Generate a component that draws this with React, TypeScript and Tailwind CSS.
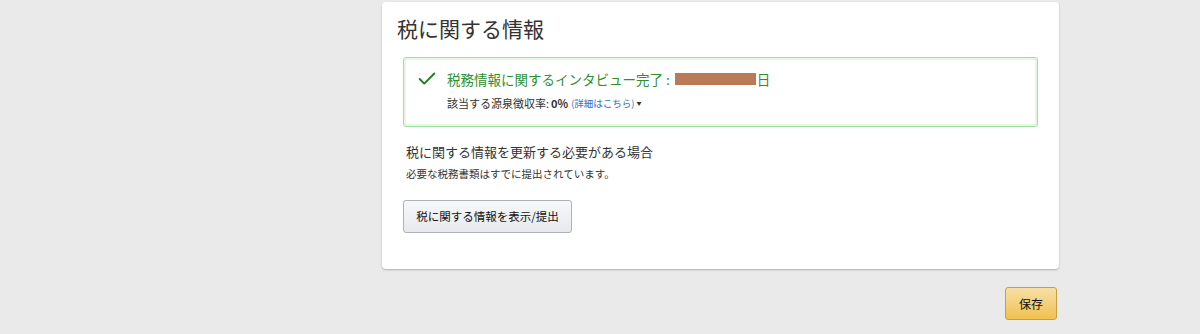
import { Check } from "lucide-react";

const font = { fontFamily: '"Noto Sans CJK JP", "Noto Sans", sans-serif' };

const App = () => {
  return (
    <div className="min-h-[334px] w-[1200px] bg-[#eaeaea] pt-[2px]" style={font}>
      <div className="ml-[382px] w-[677px] rounded-[4px] bg-white shadow-[0_1px_2px_rgba(0,0,0,0.25)] pb-[36px]">
        <h2 className="px-[15px] pt-[10px] text-[21px] leading-[32px] text-[#333]">税に関する情報</h2>

        <div className="mx-[21px] mt-[13px] h-[70px] rounded-[3px] border border-[#9ee09e] shadow-[inset_0_0_0_2px_#e6f7e6] px-[12px] pt-[10px]">
          <div className="flex items-center">
            <Check size={22} strokeWidth={2} className="text-[#1f7a1f]" />
            <span className="ml-[9px] text-[13.5px] leading-[22px] text-[#2f8f2f]">
              税務情報に関するインタビュー完了
            </span>
            <span className="ml-[3px] text-[13.5px] leading-[22px] text-[#2f8f2f]">:</span>
            <span className="ml-[5px] inline-block h-[12px] w-[81px] bg-[#b97a57]" />
            <span className="ml-[1px] text-[13.5px] leading-[22px] text-[#2f8f2f]">日</span>
          </div>
          <div className="ml-[31px] mt-[5px] flex items-center text-[11px] leading-[16px] text-[#333]">
            <span>該当する源泉徴収率:</span>
            <span className="ml-[2px] font-bold">0%</span>
            <span className="ml-[3px] text-[9.5px] text-[#2e6fbf]">(詳細はこちら)</span>
            <span className="ml-[2px] text-[5px] text-[#333]">▼</span>
          </div>
        </div>

        <div className="px-[24px] pt-[15px]">
          <p className="text-[13px] leading-[20px] text-[#333]">税に関する情報を更新する必要がある場合</p>
          <p className="mt-[4px] text-[10.5px] leading-[16px] text-[#333]">必要な税務書類はすでに提出されています。</p>
          <button className="-ml-[3px] mt-[18px] h-[33px] w-[169px] rounded-[3px] border border-[#adb1b8] bg-gradient-to-b from-[#f7f8fa] to-[#e7e9ec] text-[11.5px] text-[#111]">
            税に関する情報を表示/提出
          </button>
        </div>
      </div>

      <div className="mt-[18px] ml-[1005px] flex">
        <button className="h-[33px] w-[52px] rounded-[3px] border border-[#c89f3e] bg-gradient-to-b from-[#f7dfa5] to-[#f0c14b] text-[12px] text-[#111]">
          保存
        </button>
      </div>
    </div>
  );
};

export default App;
